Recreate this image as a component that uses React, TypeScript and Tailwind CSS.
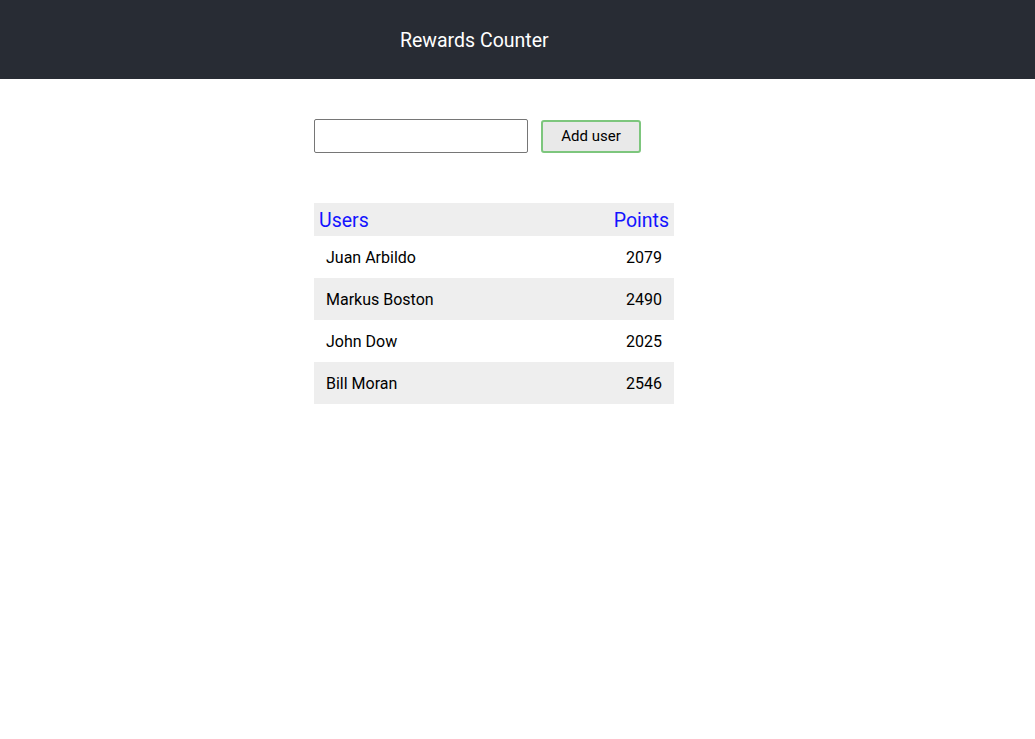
const users = [
  { name: "Juan Arbildo", points: 2079 },
  { name: "Markus Boston", points: 2490 },
  { name: "John Dow", points: 2025 },
  { name: "Bill Moran", points: 2546 },
];

export default function App() {
  return (
    <div className="min-h-screen bg-white font-['Roboto',sans-serif] text-black">
      <header className="flex h-[79px] items-center bg-[#282c34] pl-[400px] pt-[2px] text-[19.5px] text-white">
        Rewards Counter
      </header>
      <main className="ml-[314px] w-[360px] pt-[40px]">
        <div className="flex items-center gap-[13px]">
          <input
            type="text"
            className="h-[34px] w-[214px] rounded-[2px] border border-[#767676] px-2 outline-none"
          />
          <button className="h-[33px] w-[100px] rounded-[3px] border-2 border-[#7dc67d] bg-[#e9e9e9] text-[15px]">
            Add user
          </button>
        </div>
        <table className="mt-[50px] w-full border-collapse">
          <thead>
            <tr className="h-[33px] bg-[#eeeeee] text-[19.5px] text-[#1414ff]">
              <th className="pl-[5px] pt-[2px] text-left font-normal">Users</th>
              <th className="pr-[5px] pt-[2px] text-right font-normal">Points</th>
            </tr>
          </thead>
          <tbody>
            {users.map((user, i) => (
              <tr
                key={user.name}
                className={i % 2 === 1 ? "h-[42px] bg-[#eeeeee] text-[16px]" : "h-[42px] text-[16px]"}
              >
                <td className="pl-[12px] pt-[2px]">{user.name}</td>
                <td className="pr-[12px] pt-[2px] text-right">{user.points}</td>
              </tr>
            ))}
          </tbody>
        </table>
      </main>
    </div>
  );
}
